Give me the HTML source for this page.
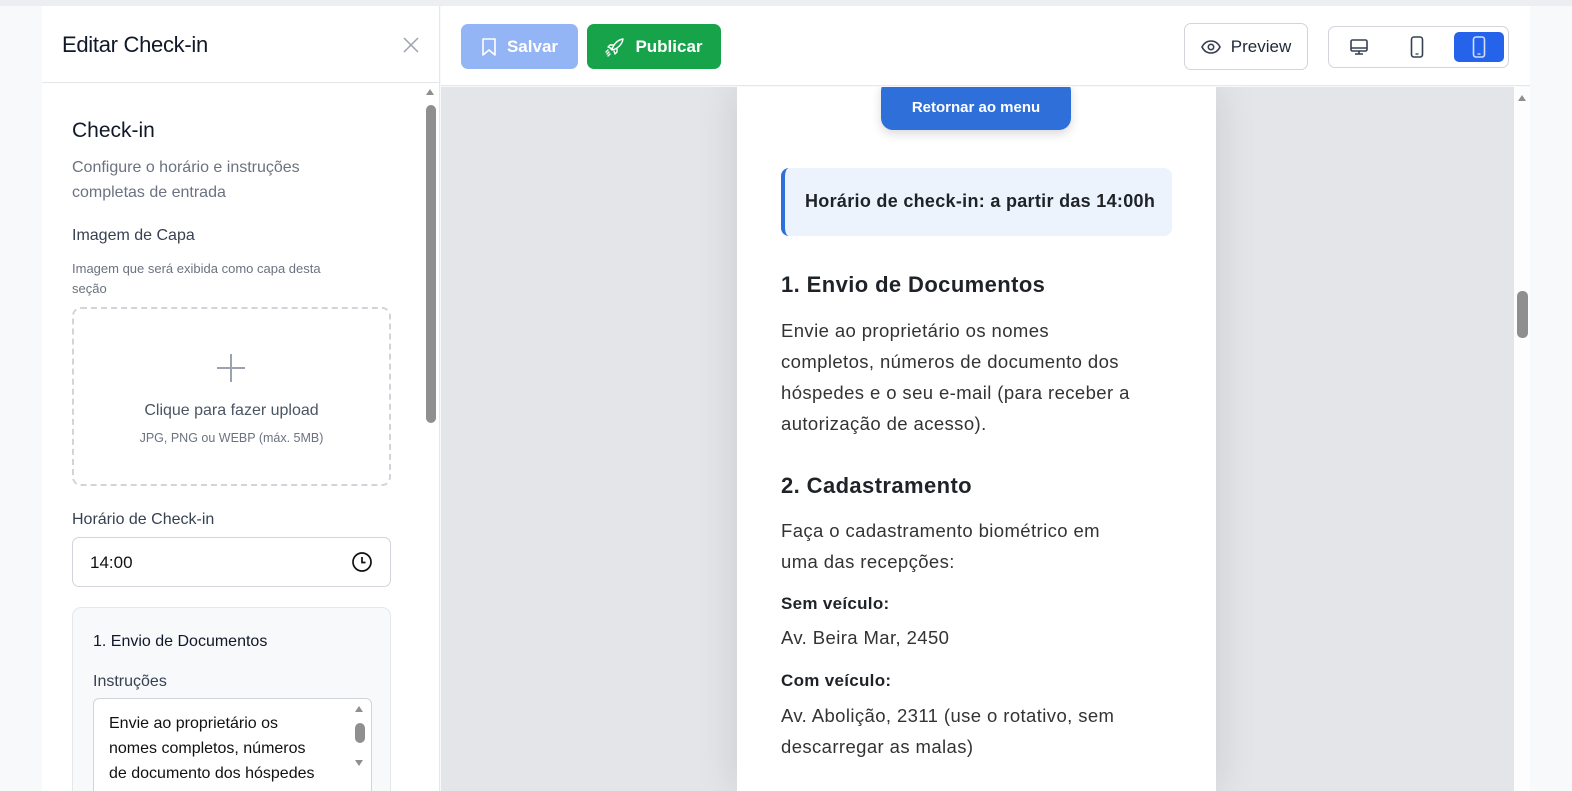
<!DOCTYPE html>
<html><head><meta charset="utf-8">
<style>
*{box-sizing:border-box;margin:0;padding:0}
html,body{width:1572px;height:791px;overflow:hidden}
body{background:#f8f9fb;font-family:"Liberation Sans",sans-serif;position:relative}
.topstrip{position:absolute;left:0;top:0;width:1572px;height:6px;background:#eceef1}
.side{position:absolute;left:42px;top:6px;width:398px;height:785px;background:#fff;border-right:1px solid #e5e7eb;overflow:hidden}
.sidehead{height:77px;border-bottom:1px solid #e5e7eb;position:relative}
.sidehead h1{position:absolute;left:20px;top:26px;font-size:22px;font-weight:normal;color:#111827;letter-spacing:-0.3px}
.close{position:absolute;left:360px;top:30px}
.sscroll{position:absolute;left:380px;top:78px;width:17px;height:707px}
.sthumb{position:absolute;left:4px;top:21px;width:10px;height:318px;background:#8f8f8f;border-radius:5px}
.arrow{position:absolute;width:0;height:0;border-left:4px solid transparent;border-right:4px solid transparent;border-bottom:6px solid #8f8f8f}
.abs{position:absolute}
.main{position:absolute;left:441px;top:6px;width:1089px;height:785px}
.toolbar{position:absolute;left:0;top:0;width:1089px;height:80px;background:#fff;border-bottom:1px solid #e5e7eb}
.btn{position:absolute;border-radius:7px;color:#fff;font-weight:bold;font-size:17px;display:flex;align-items:center;justify-content:center;gap:10px}
.canvas{position:absolute;left:0;top:81px;width:1073px;height:704px;background:#e4e5e9;overflow:hidden}
.phone{position:absolute;left:296px;top:0;width:479px;height:704px;background:#fff;box-shadow:0 0 40px rgba(0,0,0,.12)}
.mscroll{position:absolute;left:1073px;top:81px;width:16px;height:704px;background:#fdfdfd}
.pt{color:#1f2328;font-family:"Liberation Sans",sans-serif;white-space:nowrap}
.body18{font-size:18.5px;line-height:31px;color:#333;letter-spacing:0.4px}
</style></head><body>
<div class="topstrip"></div>

<div class="side">
  <div class="sidehead">
    <h1>Editar Check-in</h1>
    <svg class="close" width="18" height="18" viewBox="0 0 18 18"><path d="M2 2L16 16M16 2L2 16" stroke="#9ca3af" stroke-width="1.5"/></svg>
  </div>
  <div class="sscroll">
    <div class="arrow" style="left:4px;top:5px"></div>
    <div class="sthumb"></div>
  </div>
  <div class="abs" style="left:30px;top:113px;font-size:21px;color:#111827">Check-in</div>
  <div class="abs" style="left:30px;top:149px;font-size:16px;color:#6b7280;line-height:25px;white-space:nowrap">Configure o horário e instruções<br>completas de entrada</div>
  <div class="abs" style="left:30px;top:221px;font-size:16px;color:#374151">Imagem de Capa</div>
  <div class="abs" style="left:30px;top:253px;font-size:13px;color:#6b7280;line-height:20px;white-space:nowrap">Imagem que será exibida como capa desta<br>seção</div>
  <div class="abs" style="left:30px;top:301px;width:319px;height:179px;border:2px dashed #d1d5db;border-radius:9px">
    <svg class="abs" style="left:142px;top:44px" width="30" height="30" viewBox="0 0 30 30"><path d="M15 1V29M1 15H29" stroke="#9ca3af" stroke-width="2"/></svg>
    <div class="abs" style="left:0;width:315px;top:93px;text-align:center;font-size:16px;color:#4b5563">Clique para fazer upload</div>
    <div class="abs" style="left:0;width:315px;top:122px;text-align:center;font-size:12.5px;color:#6b7280">JPG, PNG ou WEBP (máx. 5MB)</div>
  </div>
  <div class="abs" style="left:30px;top:505px;font-size:16px;color:#374151">Horário de Check-in</div>
  <div class="abs" style="left:30px;top:531px;width:319px;height:50px;border:1px solid #d1d5db;border-radius:7px">
    <div class="abs" style="left:17px;top:15px;font-size:17px;color:#111">14:00</div>
    <svg class="abs" style="left:278px;top:13px" width="22" height="22" viewBox="0 0 22 22"><circle cx="11" cy="11" r="9" fill="none" stroke="#111" stroke-width="1.7"/><path d="M11 6V11.5H14.5" fill="none" stroke="#111" stroke-width="1.7"/></svg>
  </div>
  <div class="abs" style="left:30px;top:601px;width:319px;height:200px;border:1px solid #e5e7eb;border-radius:9px;background:#f8f9fb">
    <div class="abs" style="left:20px;top:25px;font-size:16px;color:#111827">1. Envio de Documentos</div>
    <div class="abs" style="left:20px;top:65px;font-size:16px;color:#374151">Instruções</div>
    <div class="abs" style="left:20px;top:90px;width:279px;height:120px;border:1px solid #d1d5db;border-radius:6px;background:#fff">
      <div class="abs" style="left:15px;top:12px;font-size:16px;line-height:25px;color:#111;white-space:nowrap">Envie ao proprietário os<br>nomes completos, números<br>de documento dos hóspedes</div>
      <div class="arrow" style="left:261px;top:7px"></div>
      <div class="abs" style="left:261px;top:24px;width:10px;height:20px;background:#8f8f8f;border-radius:5px"></div>
      <div class="abs" style="left:261px;top:61px;border-left:4px solid transparent;border-right:4px solid transparent;border-top:6px solid #8f8f8f"></div>
    </div>
  </div>
</div>

<div class="main">
  <div class="toolbar">
    <div class="btn" style="left:20px;top:18px;width:117px;height:45px;background:#93b4f5">
      <svg width="16" height="20" viewBox="0 0 16 20"><path d="M2 2H14V18L8 13L2 18Z" fill="none" stroke="#fff" stroke-width="1.6" stroke-linejoin="round"/></svg>Salvar</div>
    <div class="btn" style="left:146px;top:18px;width:134px;height:45px;background:#16a34a">
      <svg width="20" height="20" viewBox="0 0 20 20"><path d="M7 13C8 8 12 3 18 2C17 8 12 12 7 13ZM7 13L5 11M9 8H5L3 10L6 11M12 11V15L10 17L9 14M4 15L2 17M5 17L3 19M3 13L1 15" fill="none" stroke="#fff" stroke-width="1.4" stroke-linecap="round" stroke-linejoin="round"/></svg>Publicar</div>
    <div class="btn" style="left:743px;top:17px;width:124px;height:47px;background:#fff;border:1px solid #d1d5db;color:#1f2937;font-weight:normal">
      <svg width="20" height="14" viewBox="0 0 20 14"><path d="M1 7C3 3 6 1 10 1S17 3 19 7C17 11 14 13 10 13S3 11 1 7Z" fill="none" stroke="#374151" stroke-width="1.6"/><circle cx="10" cy="7" r="2.7" fill="none" stroke="#374151" stroke-width="1.6"/></svg>Preview</div>
    <div class="abs" style="left:887px;top:20px;width:181px;height:42px;border:1px solid #d1d5db;border-radius:7px;background:#fff">
      <svg class="abs" style="left:21px;top:11px" width="18" height="18" viewBox="0 0 18 18"><rect x="1" y="2" width="16" height="11" rx="1.5" fill="none" stroke="#374151" stroke-width="1.6"/><path d="M1 10H17M9 13V16M5 16H13" stroke="#374151" stroke-width="1.6"/></svg>
      <svg class="abs" style="left:81px;top:9px" width="14" height="22" viewBox="0 0 14 22"><rect x="1.5" y="1" width="11" height="20" rx="2.5" fill="none" stroke="#374151" stroke-width="1.6"/><path d="M5.5 18H8.5" stroke="#374151" stroke-width="1.3"/></svg>
      <div class="abs" style="left:125px;top:5px;width:50px;height:30px;background:#2563eb;border-radius:5px">
        <svg class="abs" style="left:18px;top:4px" width="14" height="22" viewBox="0 0 14 22"><rect x="1.5" y="1" width="11" height="20" rx="2.5" fill="none" stroke="#cfe0ff" stroke-width="1.6"/><path d="M5.5 18H8.5" stroke="#cfe0ff" stroke-width="1.3"/></svg>
      </div>
    </div>
  </div>
  <div class="canvas">
    <div class="phone">
      <div class="abs" style="left:144px;top:-8px;width:190px;height:51px;background:#2f6fd9;border-radius:12px;box-shadow:0 4px 10px rgba(0,0,0,.15);color:#fff;font-weight:bold;font-size:15px;text-align:center;line-height:57px">Retornar ao menu</div>
      <div class="abs" style="left:44px;top:81px;width:391px;height:68px;background:#ecf3fc;border-left:4px solid #2f6fd9;border-radius:8px">
        <div class="abs pt" style="left:20px;top:23px;font-size:18px;font-weight:bold;letter-spacing:0.3px">Horário de check-in: a partir das 14:00h</div>
      </div>
      <div class="abs pt" style="left:44px;top:185px;font-size:22px;font-weight:bold;letter-spacing:0.4px">1. Envio de Documentos</div>
      <div class="abs pt body18" style="left:44px;top:228px">Envie ao proprietário os nomes<br>completos, números de documento dos<br>hóspedes e o seu e-mail (para receber a<br>autorização de acesso).</div>
      <div class="abs pt" style="left:44px;top:386px;font-size:22px;font-weight:bold;letter-spacing:0.4px">2. Cadastramento</div>
      <div class="abs pt body18" style="left:44px;top:428px">Faça o cadastramento biométrico em<br>uma das recepções:</div>
      <div class="abs pt" style="left:44px;top:507px;font-size:17px;font-weight:bold;letter-spacing:0.3px">Sem veículo:</div>
      <div class="abs pt body18" style="left:44px;top:535px">Av. Beira Mar, 2450</div>
      <div class="abs pt" style="left:44px;top:584px;font-size:17px;font-weight:bold;letter-spacing:0.3px">Com veículo:</div>
      <div class="abs pt body18" style="left:44px;top:613px">Av. Abolição, 2311 (use o rotativo, sem<br>descarregar as malas)</div>
    </div>
  </div>
  <div class="mscroll">
    <div class="arrow" style="left:4px;top:8px"></div>
    <div class="abs" style="left:3px;top:204px;width:11px;height:47px;background:#8f8f8f;border-radius:5px"></div>
  </div>
</div>
</body></html>
